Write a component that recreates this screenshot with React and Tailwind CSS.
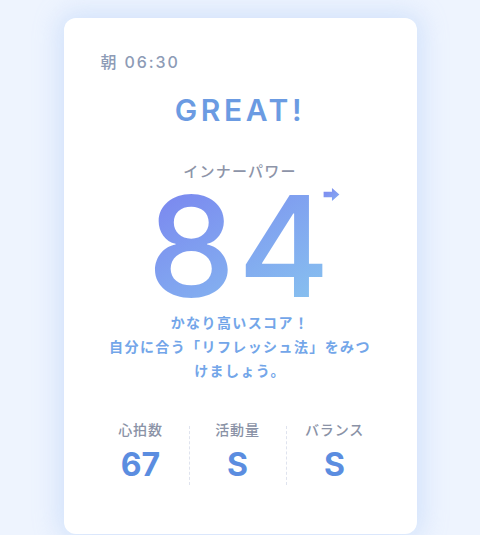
import React from 'react';

const STATS = [
  { label: '心拍数', value: '67' },
  { label: '活動量', value: 'S' },
  { label: 'バランス', value: 'S' },
];

const jp = { fontFamily: 'Inter, "Noto Sans CJK JP", sans-serif' };

export default function App() {
  return (
    <div className="w-[480px] h-[535px] overflow-hidden bg-[#eef4fe] flex justify-center pt-[18px]" style={jp}>
      <div className="w-[353px] h-[516px] shrink-0 bg-white rounded-[12px] shadow-[0_0_24px_6px_rgba(160,195,245,0.35)] flex flex-col">
        {/* time */}
        <div className="pl-[37px] pt-[33px] text-[16px] leading-[22px] font-medium text-[#8d9bb6] tracking-[0.12em]">
          朝 06:30
        </div>

        <div className="mt-[19px] text-center text-[30px] leading-[36px] font-semibold text-[#6b9be2] tracking-[0.12em]">
          GREAT!
        </div>

        <div className="mt-[34px] text-center text-[15px] leading-[20px] font-medium text-[#8d94a8] tracking-[0.08em]">
          インナーパワー
        </div>

        {/* score */}
        <div className="relative flex justify-center mt-[14px]">
          <span className="py-[6px] -my-[6px] text-[140px] leading-[100px] font-medium tracking-[0.02em] bg-gradient-to-br from-[#7a84ef] to-[#88c4ef] bg-clip-text text-transparent">
            84
          </span>
          <svg className="absolute left-[259px] top-[-8px]" width="17" height="13" viewBox="0 0 17 14">
            <defs>
              <linearGradient id="ar" x1="0" y1="0" x2="1" y2="1">
                <stop offset="0" stopColor="#7c86f0" />
                <stop offset="1" stopColor="#86aef2" />
              </linearGradient>
            </defs>
            <path d="M0 4h9V0l8 7-8 7v-4H0z" fill="url(#ar)" />
          </svg>
        </div>

        <p className="mt-[15px] mx-auto w-[262px] text-center text-[14px] leading-[24px] font-bold text-[#73a6e9] tracking-[0.1em]">
          かなり高いスコア！<br />
          自分に合う「リフレッシュ法」をみつけましょう。
        </p>

        {/* stats */}
        <div className="mt-[37px] ml-[29px] flex">
          {STATS.map((s, i) => (
            <React.Fragment key={s.label}>
              {i > 0 && <div className="mt-[6px] h-[59px] w-0 border-l border-dashed border-[#dfe3ee]" />}
              <div className="w-[96px] flex flex-col items-center">
                <span className="text-[14px] leading-[20px] font-medium text-[#8a92a6] tracking-[0.06em]">{s.label}</span>
                <span className="mt-[7px] text-[32px] leading-[36px] font-bold text-[#5b8de0]">{s.value}</span>
              </div>
            </React.Fragment>
          ))}
        </div>
      </div>
    </div>
  );
}
